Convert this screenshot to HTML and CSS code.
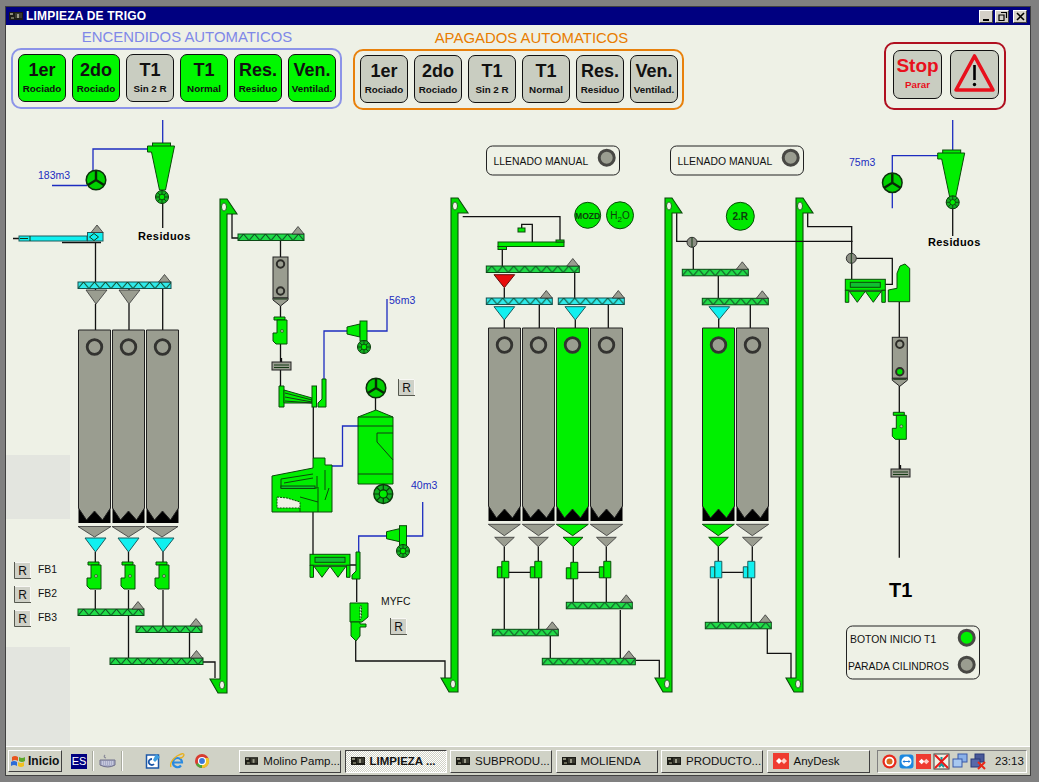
FILE: index.html
```html
<!DOCTYPE html>
<html>
<head>
    <meta charset="UTF-8">
    <title>LIMPIEZA DE TRIGO</title>
    <link rel="stylesheet" href="styles.css">
</head>
<body>
<svg class="defs-only" width="0" height="0">
    <defs>
        <symbol id="ico-console" viewBox="0 0 14 10">
            <rect x="0" y="1" width="14" height="8" fill="#1c1c16"/>
            <rect x="1" y="2" width="3" height="2" fill="#8a8a78"/>
            <rect x="6" y="2" width="7" height="5" fill="#3a3a30"/>
            <rect x="8" y="3" width="2" height="4" fill="#9a9a88"/>
            <rect x="2" y="6" width="3" height="2" fill="#6a6a58"/>
        </symbol>
        <symbol id="ico-anydesk" viewBox="0 0 16 16">
            <rect width="16" height="16" fill="#ef3b30"/>
            <path d="M3 8l3-3 3 3-3 3z" fill="#fff"/>
            <path d="M8 8l3-3 3 3-3 3z" fill="#ffd0c8"/>
        </symbol>
    </defs>
</svg>

<div class="window">
    <div class="titlebar">
        <svg class="title-icon" width="14" height="10"><use href="#ico-console"/></svg>
        <span class="title-text">LIMPIEZA DE TRIGO</span>
        <div class="win-btns">
            <span class="win-btn"><svg width="13" height="11"><rect x="3" y="8" width="6" height="2" fill="#000"/></svg></span>
            <span class="win-btn win-btn-mid"><svg width="13" height="11"><path d="M5 1.5h5.5v5.500M3 4h5v5.500H3z" fill="none" stroke="#000" stroke-width="1.2"/></svg></span>
            <span class="win-btn win-btn-close"><svg width="13" height="11"><path d="M3 2l7 7M10 2l-7 7" stroke="#000" stroke-width="1.6"/></svg></span>
        </div>
    </div>

    <div class="content">
        <div class="panels">
            <div class="group">
                <div class="group-title title-on">ENCENDIDOS AUTOMATICOS</div>
                <div class="box box-on">
                    <div class="mode mode-on"><b>1er</b><small>Rociado</small></div>
                    <div class="mode mode-on"><b>2do</b><small>Rociado</small></div>
                    <div class="mode"><b>T1</b><small>Sin 2 R</small></div>
                    <div class="mode mode-on"><b>T1</b><small>Normal</small></div>
                    <div class="mode mode-on"><b>Res.</b><small>Residuo</small></div>
                    <div class="mode mode-on"><b>Ven.</b><small>Ventilad.</small></div>
                </div>
            </div>
            <div class="group group-off">
                <div class="group-title title-off">APAGADOS AUTOMATICOS</div>
                <div class="box box-off">
                    <div class="mode"><b>1er</b><small>Rociado</small></div>
                    <div class="mode"><b>2do</b><small>Rociado</small></div>
                    <div class="mode"><b>T1</b><small>Sin 2 R</small></div>
                    <div class="mode"><b>T1</b><small>Normal</small></div>
                    <div class="mode"><b>Res.</b><small>Residuo</small></div>
                    <div class="mode"><b>Ven.</b><small>Ventilad.</small></div>
                </div>
            </div>
            <div class="stop-box">
                <div class="mode mode-stop"><b>Stop</b><small>Parar</small></div>
                <div class="mode mode-stop">
                    <svg width="47" height="47" viewBox="0 0 47 47">
                        <path d="M23.5 5L42 39H5z" fill="none" stroke="#e8101c" stroke-width="3.6" stroke-linejoin="round"/>
                        <path d="M23.5 14v15" stroke="#000" stroke-width="2.6"/>
                        <circle cx="23.5" cy="33.5" r="1.7" fill="#000"/>
                    </svg>
                </div>
            </div>
        </div>

        <svg class="plant" viewBox="6 112 1024 634" width="1024" height="634">
            <defs>
                <pattern id="zig" width="11" height="6.5" patternUnits="userSpaceOnUse">
                    <path d="M0 6.5L5.5 0L11 6.5" fill="none" stroke="#104020" stroke-width="1"/>
                </pattern>

                <g id="top-tri"><path class="tri" d="M0 0l6 7.5H-6z"/></g>

                <g id="screw-g66">
                    <rect class="screw-g" width="66" height="6.5"/><rect class="screw-z" width="66" height="6.5"/>
                    <use href="#top-tri" x="60" y="-7.5"/>
                </g>
                <g id="screw-g93">
                    <rect class="screw-g" width="93" height="6.5"/><rect class="screw-z" width="93" height="6.5"/>
                    <use href="#top-tri" x="86.5" y="-7.5"/>
                </g>
                <g id="screw-c66">
                    <rect class="screw-c" width="66" height="6.5"/><rect class="screw-z" width="66" height="6.5"/>
                    <use href="#top-tri" x="60" y="-7.5"/>
                </g>
                <g id="screw-c93">
                    <rect class="screw-c" width="93" height="6.5"/><rect class="screw-z" width="93" height="6.5"/>
                    <use href="#top-tri" x="86.5" y="-7.5"/>
                </g>

                <g id="elevator">
                    <path class="elev" d="M0 0H7L17 15H7V480V494H-2L-10 480H0V15H0z"/>
                    <ellipse class="hole" cx="4" cy="8" rx="2.5" ry="4"/>
                    <ellipse class="hole" cx="2" cy="486" rx="2.5" ry="4"/>
                </g>

                <g id="silo-bottom">
                    <rect class="silo-black" y="176" width="32" height="17"/>
                </g>
                <g id="silo-gray">
                    <use href="#silo-bottom"/>
                    <path class="silo" d="M0 0H32V178L24 190L16 181L8 190L0 178z"/>
                    <circle class="ring" cx="16" cy="17" r="7.3"/>
                </g>
                <g id="silo-green">
                    <use href="#silo-bottom"/>
                    <path class="silo silo-on" d="M0 0H32V178L24 190L16 181L8 190L0 178z"/>
                    <circle class="ring" cx="16" cy="17" r="7.3"/>
                </g>

                <g id="feeder">
                    <path class="fill-g" d="M1 0H12V3H1z"/>
                    <path class="fill-g" d="M0 16H4V3H14V27H3L0 24z"/>
                    <circle class="dot" cx="9" cy="14" r="1.5"/>
                </g>

                <g id="split-g">
                    <path class="fill-g" d="M0 5.5H4.500V0H11.5V16.5H0z"/>
                    <path class="thin" d="M4.500 5.5V16.5"/>
                </g>
                <g id="split-c">
                    <path class="fill-c" d="M0 5.5H4.500V0H11.5V16.5H0z"/>
                    <path class="thin" d="M4.500 5.5V16.5"/>
                </g>

                <g id="fan">
                    <circle class="fan-disc" r="9.8"/>
                    <path class="fan-arm" d="M0 0V-9M0 0L-8 5M0 0L8 5"/>
                </g>
                <g id="rotary">
                    <circle class="rot-disc" r="6.5"/>
                    <circle class="rot-in" r="2.8"/>
                    <path class="rot-arm" d="M0 -6.5V-2.8M0 6.5V2.8M-6.5 0H-2.8M6.5 0H2.8M-4.6 -4.6L-2 -2M4.6 -4.6L2 -2M-4.6 4.6L-2 2M4.6 4.6L2 2"/>
                </g>
                <g id="cyclone">
                    <rect class="fill-g" x="-10" y="0" width="18" height="4"/>
                    <path class="fill-g" d="M-15 3H12L3 47H-3L-11 9H-15z"/>
                </g>
                <g id="blower">
                    <path class="fill-g" d="M0 6L13 3V16L0 13z"/>
                    <rect class="fill-g" x="13" y="0" width="7" height="20"/>
                </g>
                <g id="leg-box">
                    <path class="wire" d="M9.5 -4V0"/>
                    <rect class="box-gray" width="19" height="8"/>
                    <path class="thin" d="M2 3H17M2 5.5H17"/>
                </g>
                <g id="screen">
                    <rect class="fill-g" width="40" height="11"/>
                    <rect class="fill-dk" x="5" y="3" width="30" height="5"/>
                    <path class="fill-g" d="M0 11H3.5V23H0zM36.5 11H40V23H36.5z"/>
                    <path class="fill-g" d="M4 12H20L12 23zM20 12H36L28 23z"/>
                </g>
                <g id="bucket">
                    <rect class="silo" width="15" height="41"/>
                    <path class="silo" d="M0 41H15V43L7.5 49L0 43z"/>
                    <circle class="ring-s" cx="7.5" cy="7" r="3.7"/>
                    <path class="thin" d="M1 42H14"/>
                </g>
                <g id="btn-r">
                    <rect class="r-face" width="17" height="16.5"/>
                    <path class="r-edge" d="M0.5 0V16.5H17"/>
                    <path class="r-light" d="M1 0.5H16.5V16"/>
                    <text class="r-text" x="8.5" y="12.5" text-anchor="middle">R</text>
                </g>
                <g id="lamp-off"><circle class="lamp" r="7.5"/></g>
                <g id="lamp-on"><circle class="lamp lamp-on" r="7.5"/></g>
            </defs>

            <rect class="shade" x="6" y="455" width="64" height="64"/>
            <rect class="shade" x="6" y="647" width="64" height="99"/>

            <!-- left line -->
            <path class="wire-blue" d="M162.7 120V146M148 149H93V171M52 185.5H87"/>
            <path class="wire" d="M162.7 203V228"/>
            <use href="#cyclone" x="162.5" y="143"/>
            <use href="#rotary" x="162" y="197"/>
            <use href="#fan" x="96" y="180"/>
            <text class="lbl-blue" x="38" y="179">183m3</text>
            <text class="lbl-bold" x="138" y="240">Residuos</text>

            <path class="wire" d="M13 238.5H19M62 242.5H101M95.5 243V282M95.5 288V291M95.5 304V330M129 288V291M129 304V330M162.7 288V330"/>
            <rect class="fill-c" x="19" y="236" width="68" height="5"/>
            <path class="thin" d="M30 236V241M20 238.5H28"/>
            <rect class="fill-c" x="87.5" y="232.5" width="15.5" height="8.5"/>
            <path class="thin" d="M94 233.5L98.5 237L94 240.5L89.5 237z"/>
            <use href="#top-tri" x="97" y="225"/>

            <use href="#screw-c93" x="78" y="282"/>
            <path class="tri" d="M86 290H107L96 304z"/>
            <path class="tri" d="M119 290H140L129 304z"/>
            <use href="#silo-gray" x="78.5" y="330"/>
            <use href="#silo-gray" x="112.5" y="330"/>
            <use href="#silo-gray" x="146.5" y="330"/>

            <path class="tri" d="M78 526.5H111L94.5 537z"/>
            <path class="tri" d="M112 526.5H145L128.5 537z"/>
            <path class="tri" d="M146 526.5H178L162 537z"/>
            <path class="fill-c" d="M85 538H106L95.5 552z"/>
            <path class="fill-c" d="M118 538H139L128.5 552z"/>
            <path class="fill-c" d="M153 538H174L163 552z"/>
            <path class="wire" d="M95.3 552V562M128.5 552V562M163 552V562M95.3 590V609M128.5 590V658M163 590V626M189.5 632V658M203 662H215V678"/>
            <use href="#feeder" x="87" y="562"/>
            <use href="#feeder" x="121" y="562"/>
            <use href="#feeder" x="155" y="562"/>
            <use href="#screw-g66" x="78" y="609"/>
            <use href="#screw-g66" x="136" y="626"/>
            <use href="#screw-g93" x="110" y="658"/>

            <use href="#btn-r" x="14" y="562"/>
            <use href="#btn-r" x="14" y="586"/>
            <use href="#btn-r" x="14" y="610"/>
            <text class="lbl" x="38" y="573">FB1</text>
            <text class="lbl" x="38" y="597">FB2</text>
            <text class="lbl" x="38" y="621">FB3</text>

            <use href="#elevator" x="220" y="199"/>

            <!-- centre line -->
            <path class="wire" d="M232 214V238H238M280.5 240V257M280.5 306V318M280.5 344V362M280.5 370V386M313.3 407V458M375.5 398V410M313 512V555M356.7 579V602M355.7 641V661H445V678M350 565H358"/>
            <use href="#screw-g66" x="238" y="234"/>
            <use href="#bucket" x="273" y="257"/>
            <circle class="ring-s" cx="280.5" cy="291" r="3.7"/>
            <use href="#feeder" x="273" y="317"/>
            <use href="#leg-box" x="272" y="362"/>

            <path class="wire-blue" d="M324 379V331H347M367 331H387V299M358 426H342.5V466H332M358.7 552V536H386M406 536H422.7V502"/>
            <path class="fill-g" d="M279 386H284V407H279z"/>
            <path class="fill-g" d="M284 390L312 398V403H284z"/>
            <path class="thin" d="M285 393L312 400M285 397L312 402M285 401L312 403"/>
            <rect class="fill-g" x="312" y="386" width="4.5" height="21"/>
            <path class="fill-g" d="M322 379H326V407H318V403L322 399z"/>
            <use href="#blower" x="347" y="321"/>
            <use href="#rotary" x="364" y="347"/>
            <text class="lbl-blue" x="389" y="304">56m3</text>

            <use href="#fan" x="376" y="388"/>
            <use href="#btn-r" x="398" y="379"/>

            <path class="fill-g" d="M358 417L376 410L393 417V484H358z"/>
            <path class="thin" d="M358 417H393M358 426H393M358 474H393M393 433H377V442L393 460"/>
            <g transform="translate(383.3 494) scale(1.45)"><use href="#rotary"/></g>

            <path class="fill-g" d="M272 476L313 468V458H325V465H332V512H272z"/>
            <path class="sep-hole" d="M277 497L287 498L300 502V508H277z"/>
            <path class="sep-line" d="M281 479L313 474M284 483L313 478M281 479V488H317V476M300 497L318 502M318 487V512M325 470V490M329 488L325 500M300 508V512"/>
            <rect class="fill-dk" x="281" y="486" width="34" height="2.5"/>

            <use href="#screen" x="310" y="554.3"/>
            <path class="fill-g" d="M356 552H360V579H352V575L356 571z"/>
            <use href="#blower" x="386.5" y="525.7"/>
            <use href="#rotary" x="403" y="551"/>
            <text class="lbl-blue" x="411" y="489">40m3</text>

            <path class="fill-g" d="M350 603H368V617L362 622H350z"/>
            <path class="sep-hole" d="M360 606H361.5V617L360 620z"/>
            <path class="fill-g" d="M351 622H360V624H366V627H360V636L356 641L351 636z"/>
            <text class="lbl" x="381" y="605">MYFC</text>
            <use href="#btn-r" x="390" y="618"/>

            <use href="#elevator" x="451" y="198"/>

            <!-- right lines -->
            <g transform="translate(486.5 146)">
                <rect class="panel" width="133" height="29" rx="6"/>
                <text class="lbl" x="7" y="18.5">LLENADO MANUAL</text>
            </g>
            <use href="#lamp-off" x="606.7" y="157.7"/>
            <g transform="translate(670.5 146)">
                <rect class="panel" width="133" height="29" rx="6"/>
                <text class="lbl" x="7" y="18.5">LLENADO MANUAL</text>
            </g>
            <use href="#lamp-off" x="790.7" y="157.7"/>

            <path class="wire" d="M462.7 216.7H560V240M521.7 228V224.3H532.3V242M502.3 249V266M504.3 288V298M574.7 272.7V298M504.3 320V328M539.3 304.7V328M575.3 320V328M608.3 304.7V328"/>
            <rect class="fill-g" x="518" y="228" width="7" height="4"/>
            <rect class="fill-g" x="498" y="242" width="66" height="4.5"/>
            <rect class="fill-g" x="556" y="240" width="8" height="2"/>
            <rect class="fill-g" x="498" y="246.5" width="8.5" height="3"/>
            <circle class="chip" cx="587.7" cy="215.3" r="13"/>
            <circle class="chip" cx="620" cy="215.3" r="13.5"/>
            <text class="chip-text chip-small" x="587.7" y="218.5" text-anchor="middle">MOZD</text>
            <text class="chip-text chip-thin" x="620" y="219" text-anchor="middle">H<tspan class="chip-sub" dy="3">2</tspan><tspan dy="-3">O</tspan></text>

            <use href="#screw-g93" x="486.3" y="266"/>
            <path class="fill-red" d="M494 274.7H514.7L504.3 287.7z"/>
            <use href="#screw-c66" x="486.3" y="298"/>
            <use href="#screw-c66" x="558.3" y="298"/>
            <path class="fill-c" d="M494 306.7H514.7L504.3 320z"/>
            <path class="fill-c" d="M565 306.7H585.7L575.3 320z"/>

            <use href="#silo-gray" x="488.5" y="328"/>
            <use href="#silo-gray" x="522.5" y="328"/>
            <use href="#silo-green" x="556.5" y="328"/>
            <use href="#silo-gray" x="590.5" y="328"/>

            <path class="tri" d="M488.3 524.3H520.3L504.3 535.7z"/>
            <path class="tri" d="M522.3 524.3H554.7L538.5 535.7z"/>
            <path class="fill-g" d="M556.3 524.3H588.3L572.7 535.7z"/>
            <path class="tri" d="M590.3 524.3H622.7L606.7 535.7z"/>
            <path class="tri" d="M494.7 537.3H514.3L504.3 546.7z"/>
            <path class="tri" d="M528.5 537.3H548.3L538.3 546.7z"/>
            <path class="fill-g" d="M563 537.3H583L573.3 546.7z"/>
            <path class="tri" d="M596.5 537.3H616.3L606.3 546.7z"/>
            <path class="wire" d="M504.3 546.7V561M538.3 546.7V561M573.3 546.7V562M606.3 546.7V561M508.7 572.3H530.3M577.7 572.3H599.3M504.3 577.7V629M538.7 577.7V629M573.3 578.7V602M606.3 577.7V602M550.3 635.7V658M620.3 610V658M636 660.3H659.3V677.7"/>
            <use href="#split-g" x="497.3" y="561.3"/>
            <use href="#split-g" x="530.3" y="561.3"/>
            <use href="#split-g" x="566.3" y="562.3"/>
            <use href="#split-g" x="599.3" y="561.3"/>
            <use href="#screw-g66" x="566.3" y="602.3"/>
            <use href="#screw-g66" x="492.3" y="629.3"/>
            <use href="#screw-g93" x="542.3" y="658.3"/>

            <use href="#elevator" x="665" y="198"/>
            <use href="#elevator" x="796" y="198"/>

            <circle class="chip" cx="740.3" cy="216.3" r="14"/>
            <text class="chip-text" x="740.3" y="220" text-anchor="middle">2.R</text>

            <path class="wire" d="M676.7 213.3V241.3H852.7M693.3 247V269.3M718.3 275.7V298.3M718.7 319V328M750.3 304.7V328M807.7 213.3V226.7H851.7V255M856 258.3H892.3V285M851.7 263V279.3M884.7 284.3H892.3M899.3 302V337.3"/>
            <circle class="valve" cx="692" cy="242.3" r="5"/>
            <path class="thin" d="M692 237.3V247.3"/>
            <circle class="valve" cx="851.3" cy="258.3" r="5"/>
            <path class="thin" d="M851.3 253.3V263.3"/>

            <use href="#screw-g66" x="682.3" y="269.3"/>
            <use href="#screw-g66" x="702.3" y="298.3"/>
            <path class="fill-c" d="M709 306.7H729.7L719.3 319.3z"/>
            <use href="#silo-green" x="702.5" y="328"/>
            <use href="#silo-gray" x="736.5" y="328"/>

            <path class="fill-g" d="M702.3 524.3H734.3L718.3 535.7z"/>
            <path class="tri" d="M736.3 524.3H768.7L752.3 535.7z"/>
            <path class="fill-g" d="M708.7 537.3H728.3L718.3 546.7z"/>
            <path class="tri" d="M742.5 537.3H762.3L752.3 546.7z"/>
            <path class="wire" d="M718.3 546.7V561M752.3 546.7V561M721.7 572.3H743.3M718.3 578.7V622.3M751.3 577.7V622.3M767.3 628.7V653.3H791V678"/>
            <use href="#split-c" x="710.3" y="561.3"/>
            <use href="#split-c" x="743.3" y="561.3"/>
            <use href="#screw-g66" x="705.3" y="622.3"/>

            <use href="#screen" x="845.3" y="279.3"/>
            <path class="fill-g" d="M888.3 290L897 288.3V273.3L900 266L905 264L909.7 268.3V301.7H888.3z"/>

            <path class="wire-blue" d="M952.7 120V151M938.3 155.7H892.3V173M892.3 192.7V208.3"/>
            <path class="wire" d="M952.7 208V236"/>
            <use href="#cyclone" x="952.7" y="150"/>
            <use href="#rotary" x="952.7" y="202.3"/>
            <use href="#fan" x="892.3" y="182.7"/>
            <text class="lbl-blue" x="849" y="166">75m3</text>
            <text class="lbl-bold" x="928" y="246">Residuos</text>

            <use href="#bucket" x="892.3" y="337.3"/>
            <circle class="ring-s ring-on" cx="899.8" cy="371.7" r="3.7"/>
            <path class="wire" d="M899.3 386V413M899.3 439V469M899.3 476.7V557.7"/>
            <use href="#feeder" x="892.3" y="412.3"/>
            <use href="#leg-box" x="891" y="469"/>
            <text class="lbl-t1" x="889" y="597">T1</text>

            <g transform="translate(846.5 626)">
                <rect class="panel" width="133" height="53" rx="6"/>
                <text class="lbl" x="3.5" y="17">BOTON INICIO T1</text>
                <text class="lbl" x="1.5" y="44">PARADA CILINDROS</text>
            </g>
            <use href="#lamp-on" x="966.7" y="637.7"/>
            <use href="#lamp-off" x="966.7" y="664.7"/>
        </svg>
    </div>

    <div class="taskbar">
        <div class="start">
            <svg width="16" height="15" viewBox="0 0 16 15">
                <path d="M2 3q3-2 6 0v4q-3-2-6 0z" fill="#e8541c"/>
                <path d="M9 3q3 2 6 0v4q-3 2-6 0z" fill="#5ca82c"/>
                <path d="M1 8q3-2 6 0v4q-3-2-6 0z" fill="#2c6cd8"/>
                <path d="M8 8q3 2 6 0v4q-3 2-6 0z" fill="#f0c020"/>
            </svg>
            <span>Inicio</span>
        </div>
        <div class="lang">ES</div>
        <span class="sep"></span>
        <svg class="kbd" width="17" height="15" viewBox="0 0 17 15">
            <path d="M6 1q-2 2 1 3" fill="none" stroke="#8a8a98" stroke-width="1.2"/>
            <path d="M1 6h15v5q-7 4-15 0z" fill="#a8acc8" stroke="#70708a"/>
            <path d="M3 8h11M3 10h11" stroke="#e4e4f0" stroke-dasharray="1 1"/>
        </svg>
        <span class="sep"></span>
        <div class="quick">
            <svg width="16" height="16" viewBox="0 0 16 16">
                <rect x="1.5" y="2" width="12" height="13" fill="#fff" stroke="#1c58a8" stroke-width="1.5"/>
                <path d="M7 6a3 3 0 1 0 2 5" fill="none" stroke="#1c58a8" stroke-width="1.8"/>
                <path d="M11 1l4 3-5 5-2-2z" fill="#3c9ce0"/>
            </svg>
            <svg width="17" height="17" viewBox="0 0 17 17">
                <path d="M4 9.5h9a4.5 4.5 0 1 0-9 0a4.5 4.5 0 0 0 8 3" fill="none" stroke="#2a8ae0" stroke-width="2.2"/>
                <path d="M2 14Q0 9 8 3q7-4 7-1-1 3-4 3" fill="none" stroke="#e8b020" stroke-width="1.3"/>
            </svg>
            <svg width="16" height="16" viewBox="0 0 16 16">
                <circle cx="8" cy="8" r="7" fill="#d83c30"/>
                <path d="M8 8L2 11.5A7 7 0 0 0 8 15z" fill="#4ca83c"/>
                <path d="M8 8V15A7 7 0 0 0 14.5 5H8z" fill="#f0c428"/>
                <circle cx="8" cy="8" r="3.5" fill="#3c78d8" stroke="#fff" stroke-width="1.2"/>
            </svg>
        </div>
        <div class="tasks">
            <div class="task"><svg width="14" height="10"><use href="#ico-console"/></svg><span>Molino Pamp...</span></div>
            <div class="task task-active"><svg width="14" height="10"><use href="#ico-console"/></svg><span>LIMPIEZA ...</span></div>
            <div class="task"><svg width="14" height="10"><use href="#ico-console"/></svg><span>SUBPRODU...</span></div>
            <div class="task"><svg width="14" height="10"><use href="#ico-console"/></svg><span>MOLIENDA</span></div>
            <div class="task"><svg width="14" height="10"><use href="#ico-console"/></svg><span>PRODUCTO...</span></div>
            <div class="task task-any"><svg width="16" height="16"><use href="#ico-anydesk"/></svg><span>AnyDesk</span></div>
        </div>
        <div class="tray">
            <svg width="15" height="15" viewBox="0 0 15 15">
                <circle cx="7.5" cy="7.5" r="7" fill="#e8281c"/>
                <circle cx="7.5" cy="7.5" r="4.8" fill="#fff"/>
                <circle cx="7.5" cy="7.5" r="3" fill="#d86a1c"/>
            </svg>
            <svg width="15" height="15" viewBox="0 0 15 15">
                <rect x="0.5" y="0.5" width="14" height="14" rx="3" fill="#1c88e0"/>
                <circle cx="7.5" cy="7.5" r="5" fill="#fff"/>
                <path d="M3.5 7.5l2-1.500v1h4V6l2 1.500-2 1.500V8h-4v1z" fill="#1c78d8"/>
            </svg>
            <svg width="15" height="15"><use href="#ico-anydesk"/></svg>
            <svg width="17" height="17" viewBox="0 0 17 17">
                <rect x="1" y="1" width="15" height="15" fill="#f0f0e4" stroke="#404040"/>
                <path d="M8.5 4v7M6 14l2.500-3 2.500 3" stroke="#18989c" stroke-width="2" fill="none"/>
                <path d="M2 2l13 13M15 2L2 15" stroke="#e81818" stroke-width="2"/>
            </svg>
            <svg width="16" height="16" viewBox="0 0 16 16">
                <rect x="6" y="1" width="9" height="8" fill="#8ab0e8" stroke="#3858a8"/>
                <rect x="1" y="6" width="9" height="8" fill="#a8c8f0" stroke="#3858a8"/>
            </svg>
            <svg width="16" height="17" viewBox="0 0 16 17">
                <rect x="5" y="1" width="9" height="8" fill="#485898" stroke="#283878"/>
                <rect x="1" y="6" width="9" height="8" fill="#5868a8" stroke="#283878"/>
                <path d="M8 9l7 7M15 9l-7 7" stroke="#e82818" stroke-width="2"/>
            </svg>
            <span class="clock">23:13</span>
        </div>
    </div>
</div>
</body>
</html>
```

FILE: styles.css
```css
body {
    margin: 0;
    width: 1039px;
    height: 782px;
    overflow: hidden;
    background-color: #808080;
    font-family: "Liberation Sans", Arial, sans-serif;
}
.defs-only {
    display: block;
    height: 0;
}
.window {
    width: 1024px;
    height: 768px;
    margin: 7px 0 0 6px;
    display: flex;
    flex-direction: column;
    background-color: #eef1e6;
    box-shadow: 0 0 0 1px #404040;
}

/* title bar */
.titlebar {
    height: 18px;
    background-color: #000080;
    display: flex;
    align-items: center;
    padding: 0 3px;
    color: white;
    flex-shrink: 0;
}
.title-icon {
    margin-right: 3px;
}
.title-text {
    font-size: 12px;
    letter-spacing: 0.2px;
    font-weight: bold;
}
.win-btns {
    margin-left: auto;
    display: flex;
}
.win-btn {
    width: 14px;
    height: 13px;
    background-color: #d4d0c8;
    border: 1px solid;
    border-color: #fff #404040 #404040 #fff;
    box-sizing: border-box;
    display: flex;
    align-items: center;
    justify-content: center;
    overflow: hidden;
}
.win-btn-mid {
    margin: 0 4px 0 2px;
}

/* top panels */
.content {
    flex: 1;
    display: flex;
    flex-direction: column;
}
.panels {
    height: 87px;
    display: flex;
    padding-left: 5px;
    padding-right: 24px;
}
.group {
    display: flex;
    flex-direction: column;
}
.group-off {
    margin-left: 11px;
    padding-top: 1px;
}
.group-title {
    height: 23px;
    line-height: 24px;
    font-size: 14.9px;
    text-align: center;
}
.title-on {
    color: #7f88e8;
    padding-left: 21px;
}
.title-off {
    color: #e87c00;
    padding-left: 26px;
}
.box {
    width: 331px;
    height: 61px;
    box-sizing: border-box;
    border: 2px solid;
    border-radius: 10px;
    display: flex;
    gap: 6px;
    padding: 4px 5px;
}
.box-on {
    border-color: #8c94e8;
}
.box-off {
    border-color: #e8810c;
}
.mode {
    width: 48px;
    height: 48px;
    box-sizing: border-box;
    border: 1px solid #111;
    border-radius: 7px;
    background-color: #c9cdc1;
    display: flex;
    flex-direction: column;
    align-items: center;
    color: #111;
    flex-shrink: 0;
}
.mode b {
    font-size: 18px;
    line-height: 20px;
    margin-top: 5px;
}
.mode small {
    font-size: 9.8px;
    font-weight: bold;
    line-height: 12px;
    margin-top: 3px;
    white-space: nowrap;
}
.mode-on {
    background-color: #00f800;
}
.stop-box {
    margin-left: auto;
    margin-top: 17px;
    width: 122px;
    height: 68px;
    box-sizing: border-box;
    border: 2px solid #b01020;
    border-radius: 10px;
    display: flex;
    gap: 8px;
    padding: 6px 7px;
}
.mode-stop {
    width: 49px;
    height: 49px;
    color: #e8101c;
}
.mode-stop b {
    font-size: 19px;
}
.mode-stop small {
    margin-top: 3px;
}

/* plant diagram */
.plant {
    display: block;
    flex-shrink: 0;
}
.shade {
    fill: #e3e5df;
}
.wire {
    fill: none;
    stroke: #111;
    stroke-width: 1.3;
}
.wire-blue {
    fill: none;
    stroke: #1c2cc0;
    stroke-width: 1.3;
}
.thin {
    fill: none;
    stroke: #143a14;
    stroke-width: 1;
}
.fill-g {
    fill: #00ee00;
    stroke: #0a4a0a;
    stroke-width: 1;
}
.fill-dk {
    fill: #10c030;
    stroke: #0a4a0a;
    stroke-width: 1;
}
.fill-c {
    fill: #10f0f0;
    stroke: #1c5c5c;
    stroke-width: 1;
}
.fill-red {
    fill: #e80c0c;
    stroke: #5c1010;
    stroke-width: 1;
}
.tri {
    fill: #9a9d90;
    stroke: #333;
    stroke-width: 0.8;
}
.screw-g {
    fill: #20dc48;
    stroke: #0a4a14;
    stroke-width: 1;
}
.screw-c {
    fill: #30eaea;
    stroke: #145050;
    stroke-width: 1;
}
.screw-z {
    fill: url(#zig);
}
.elev {
    fill: #00dc00;
    stroke: #0a4a0a;
    stroke-width: 1.1;
}
.hole {
    fill: #eef1e6;
    stroke: #0a4a0a;
    stroke-width: 0.8;
}
.silo {
    fill: #9a9d90;
    stroke: #222;
    stroke-width: 1;
}
.silo-on {
    fill: #00f000;
}
.silo-black {
    fill: #000;
}
.ring {
    fill: #9a9d90;
    stroke: #333330;
    stroke-width: 2.8;
}
.ring-s {
    fill: #9a9d90;
    stroke: #2c2c28;
    stroke-width: 2;
}
.ring-on {
    fill: #00e000;
}
.dot {
    fill: #b4b8a8;
    stroke: #0a4a0a;
    stroke-width: 0.6;
}
.fan-disc {
    fill: #00d000;
    stroke: #0c300c;
    stroke-width: 1.5;
}
.fan-arm {
    fill: none;
    stroke: #082808;
    stroke-width: 2.4;
}
.rot-disc {
    fill: #10b020;
    stroke: #0a3a0a;
    stroke-width: 1;
}
.rot-in {
    fill: #00ee00;
    stroke: #0a3a0a;
    stroke-width: 0.8;
}
.rot-arm {
    fill: none;
    stroke: #0a3a0a;
    stroke-width: 0.8;
}
.box-gray {
    fill: #9a9d90;
    stroke: #222;
    stroke-width: 1;
}
.sep-hole {
    fill: #eef1e6;
    stroke: #0a4a0a;
    stroke-width: 1;
    stroke-dasharray: 2 1;
}
.sep-line {
    fill: none;
    stroke: #0a4a0a;
    stroke-width: 1;
}
.r-face {
    fill: #cfd1c7;
}
.r-edge {
    fill: none;
    stroke: #55584e;
    stroke-width: 1;
}
.r-light {
    fill: none;
    stroke: #f8f8f4;
    stroke-width: 1;
}
.r-text {
    font-size: 12px;
    fill: #111;
}
.panel {
    fill: #eef1e6;
    stroke: #222;
    stroke-width: 1;
}
.lamp {
    fill: #9a9d90;
    stroke: #484844;
    stroke-width: 3;
}
.lamp-on {
    fill: #00f000;
}
.valve {
    fill: #8c8f84;
    stroke: #333;
    stroke-width: 1;
}
.chip {
    fill: #00e800;
    stroke: #0a4a0a;
    stroke-width: 1;
}
.chip-text {
    font-size: 10px;
    font-weight: bold;
    fill: #0c400c;
}
.chip-small {
    font-size: 8.6px;
}
.chip-thin {
    font-weight: normal;
}
.chip-sub {
    font-size: 8px;
}
.lbl {
    font-size: 10.4px;
    fill: #111;
}
.lbl-blue {
    font-size: 10.5px;
    fill: #1c2cc0;
}
.lbl-bold {
    font-size: 11px;
    font-weight: bold;
    letter-spacing: 0.4px;
    fill: #000;
}
.lbl-t1 {
    font-size: 20px;
    font-weight: bold;
    fill: #000;
}

/* task bar */
.taskbar {
    height: 29px;
    box-sizing: border-box;
    background-color: #d0d2c6;
    border-top: 1px solid #fff;
    display: flex;
    align-items: center;
    padding: 0 3px 0 2px;
    flex-shrink: 0;
    font-size: 11.5px;
    color: #111;
}
.start {
    width: 54px;
    height: 22px;
    box-sizing: border-box;
    border: 1px solid;
    border-color: #fff #404040 #404040 #fff;
    display: flex;
    align-items: center;
    gap: 2px;
    padding-left: 1px;
    font-size: 12px;
    font-weight: bold;
    flex-shrink: 0;
}
.lang {
    width: 16px;
    height: 15px;
    margin-left: 9px;
    background-color: #000080;
    color: white;
    font-size: 11px;
    line-height: 15px;
    text-align: center;
    flex-shrink: 0;
}
.sep {
    width: 1px;
    height: 20px;
    margin: 0 5px;
    background-color: #a8aa9e;
    border-right: 1px solid #fff;
    flex-shrink: 0;
}
.kbd {
    flex-shrink: 0;
}
.quick {
    display: flex;
    align-items: center;
    gap: 8px;
    margin-left: 17px;
    width: 94px;
    flex-shrink: 0;
}
.tasks {
    display: flex;
    gap: 3.5px;
    flex-shrink: 0;
}
.task {
    width: 102px;
    height: 23px;
    box-sizing: border-box;
    border: 1px solid;
    border-color: #fff #404040 #404040 #fff;
    display: flex;
    align-items: center;
    gap: 5px;
    padding-left: 5px;
    white-space: nowrap;
    overflow: hidden;
}
.task-active {
    font-weight: bold;
    border-color: #404040 #fff #fff #404040;
    background: repeating-conic-gradient(#fff 0 25%, #d0d2c6 0 50%) 0 0 / 2px 2px;
}
.task-any {
    width: 103px;
}
.tray {
    margin-left: 7.5px;
    width: 150px;
    height: 23px;
    box-sizing: border-box;
    border: 1px solid;
    border-color: #808080 #fff #fff #808080;
    display: flex;
    align-items: center;
    gap: 2px;
    padding-left: 4px;
    flex-shrink: 0;
}
.clock {
    margin-left: 7px;
}
```
